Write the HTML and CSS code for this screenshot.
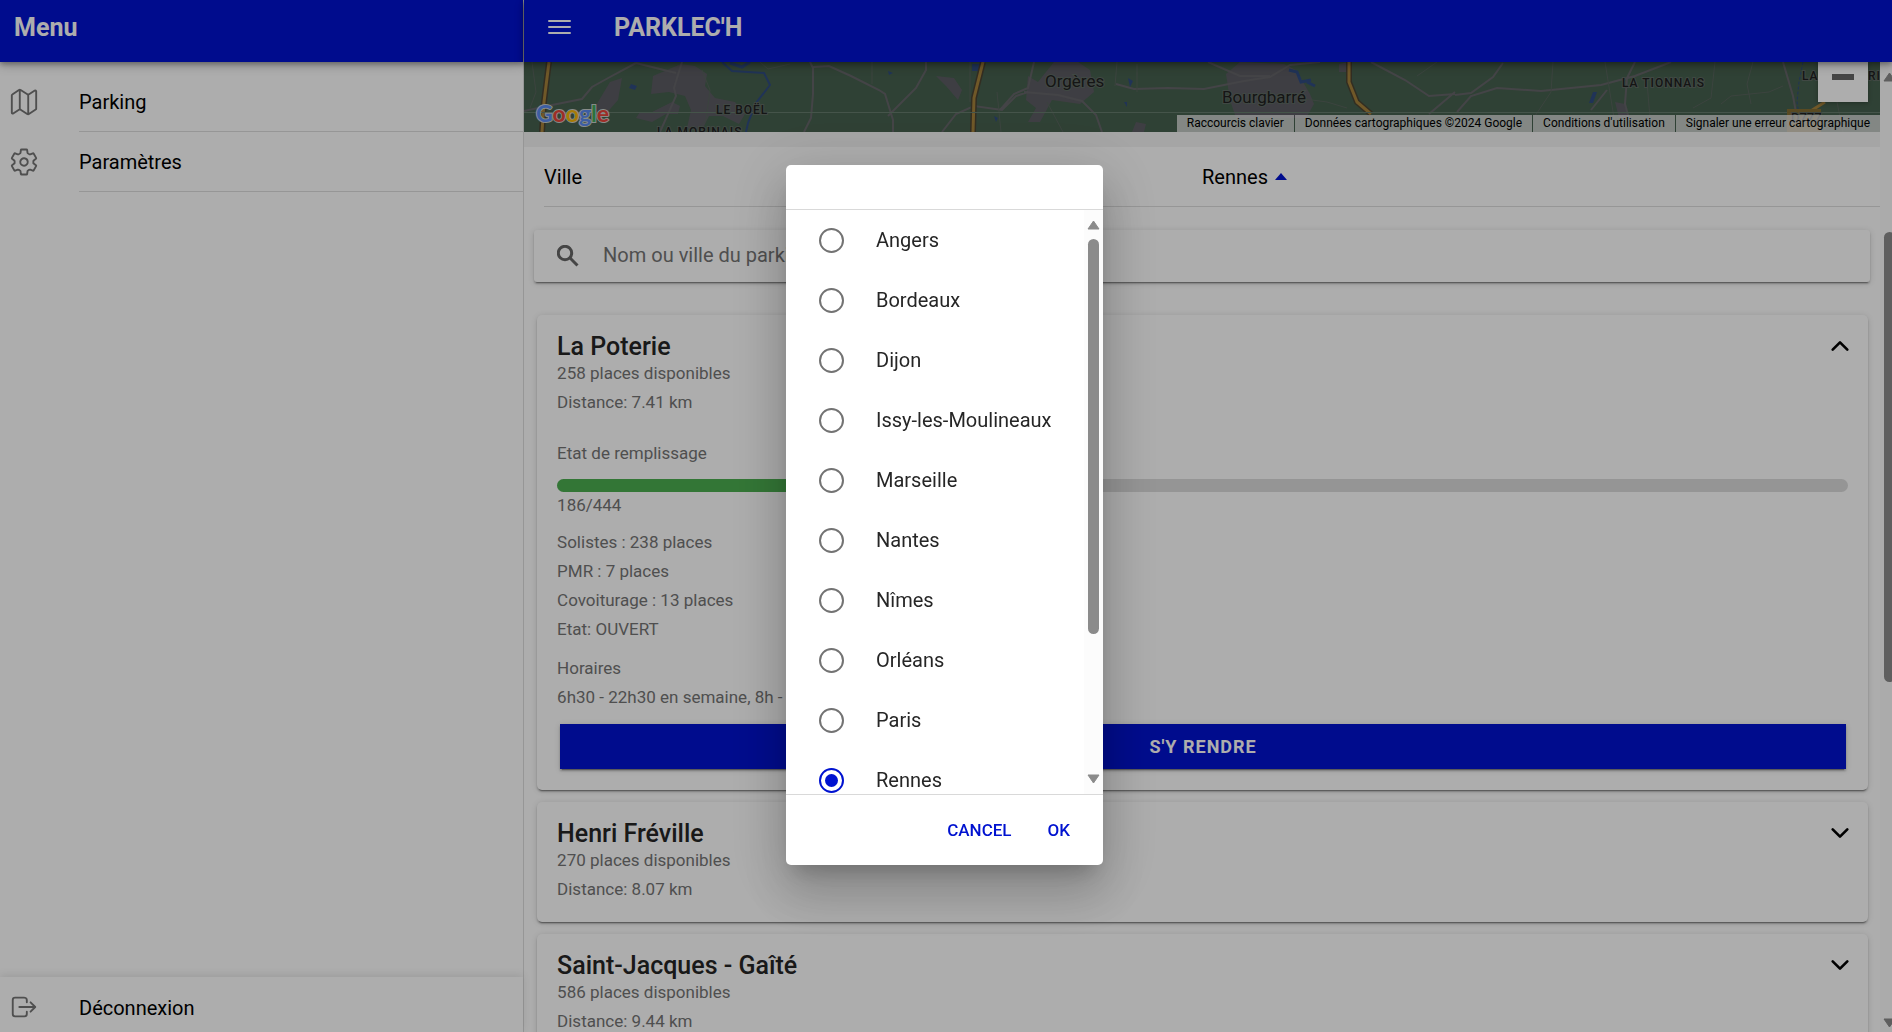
FILE: index.html
```html
<!DOCTYPE html>
<html lang="fr">
<head>
<meta charset="utf-8">
<meta name="viewport" content="width=device-width, initial-scale=1">
<title>PARKLEC'H</title>
<link rel="stylesheet" href="styles.css">
</head>
<body>
<div class="app">
  <aside class="sidebar">
    <header class="toolbar toolbar-menu"><h2 class="toolbar-title">Menu</h2></header>
    <nav class="menu">
      <a class="menu-item" href="#parking">
        <svg class="menu-icon" viewBox="0 0 512 512" aria-hidden="true"><path d="M313.27 124.64L198.73 51.36a32 32 0 00-29.28.35L56.51 127.49A16 16 0 0048 141.63v295.8a16 16 0 0023.49 14.14l97.82-63.79a32 32 0 0129.5-.24l111.86 73a32 32 0 0029.27-.11l115.43-75.94a16 16 0 008.63-14.2V74.57a16 16 0 00-23.49-14.14l-98 63.86a32 32 0 01-29.24.35zM328 128v336M184 384V48"/></svg>
        <span class="menu-label">Parking</span>
      </a>
      <a class="menu-item" href="#parametres">
        <svg class="menu-icon" viewBox="0 0 512 512" aria-hidden="true"><path d="M262.29 192.31a64 64 0 1057.4 57.4 64.13 64.13 0 00-57.4-57.4zM416.39 256a154.34 154.34 0 01-1.53 20.79l45.21 35.46a10.81 10.81 0 012.45 13.75l-42.77 74a10.81 10.81 0 01-13.14 4.59l-44.9-18.08a16.11 16.11 0 00-15.17 1.75A164.48 164.48 0 01325 400.8a15.94 15.94 0 00-8.82 12.14l-6.73 47.89a11.08 11.08 0 01-10.68 9.17h-85.54a11.11 11.11 0 01-10.69-8.87l-6.72-47.82a16.07 16.07 0 00-9-12.22 155.3 155.3 0 01-21.46-12.57 16 16 0 00-15.11-1.71l-44.89 18.07a10.81 10.81 0 01-13.14-4.58l-42.77-74a10.8 10.8 0 012.45-13.75l38.21-30a16.05 16.05 0 006-14.08c-.36-4.17-.58-8.33-.58-12.5s.21-8.27.58-12.35a16 16 0 00-6.07-13.94l-38.19-30A10.81 10.81 0 0149.48 186l42.77-74a10.81 10.81 0 0113.14-4.59l44.9 18.08a16.11 16.11 0 0015.17-1.75A164.48 164.48 0 01187 111.2a15.94 15.94 0 008.82-12.14l6.73-47.89A11.08 11.08 0 01213.23 42h85.54a11.11 11.11 0 0110.69 8.87l6.72 47.82a16.07 16.07 0 009 12.22 155.3 155.3 0 0121.46 12.57 16 16 0 0015.11 1.71l44.89-18.07a10.81 10.81 0 0113.14 4.58l42.77 74a10.8 10.8 0 01-2.45 13.75l-38.21 30a16.05 16.05 0 00-6.05 14.08c.33 4.14.55 8.3.55 12.47z"/></svg>
        <span class="menu-label">Paramètres</span>
      </a>
    </nav>
    <footer class="menu-footer">
      <a class="menu-item" href="#deconnexion">
        <svg class="menu-icon" viewBox="0 0 512 512" aria-hidden="true"><path d="M304 336v40a40 40 0 01-40 40H104a40 40 0 01-40-40V136a40 40 0 0140-40h152c22.09 0 48 17.91 48 40v40M368 336l80-80-80-80M176 256h256"/></svg>
        <span class="menu-label">Déconnexion</span>
      </a>
    </footer>
  </aside>

  <div class="page">
    <header class="toolbar toolbar-page">
      <button class="burger" type="button" aria-label="Menu">
        <svg class="burger-icon" viewBox="0 0 30 30" aria-hidden="true"><path d="M5 9h21M5 15h21M5 21h21"/></svg>
      </button>
      <h1 class="toolbar-title">PARKLEC'H</h1>
    </header>

    <div class="viewport">
      <main class="content">
        <section class="map">
          <svg class="map-tiles" viewBox="0 0 1356 70" preserveAspectRatio="xMinYMin slice" role="img" aria-label="Carte">
            <rect width="1356" height="70" fill="#46604e"/>
            <g fill="#5c5c63">
              <path d="M129 14l28-12 14 2 12 8-2 12 10 12 20 4 10 12-6 10-16-8-14 0-8 16-14-4 4-18-6-14-16-4-18 2z"/>
              <path d="M86 20l12-4-4 22-14 16-14 0 8-14z"/>
              <path d="M148 40l8 4-2 8-12 0-14 8-16-4 4-6 12 0z"/>
              <path d="M412 14l18 2 8 12-4 10-12-14z"/>
              <path d="M504 14l10 6 16-20h24l12 8 4 22-14 12-28-4-12 22-12 0 8-14-10-8z"/>
              <path d="M702 12l14-12 44 2 12 6 14 24 4 10-8 14-70 0-6-18z"/>
              <path d="M612 60l10 2-2 8h-12z"/><path d="M815 2l10-2 0 10-10 0z"/>
              <path d="M1091 40l10 2 4 14-10 0z"/>
            </g>
            <g fill="none" stroke="#656569" stroke-width="2">
              <path d="M0 49l28-6 30-6 10-12 18-10 26-14M158 0l-8 26 2 8-16 36M112 1l40 10M286 0l3 6v26l-2 24-7 14M289 5l16-1 22 10 28 14 6 4 8 26 0 12M364 54l28-28 10-18 0-8M418 70l14-18 18-8 28 4 14-14 12-4M510 0l-6 26-14 6-14 16M500 30l34 3 24 6 14 14 6 17M592 22l18 5 34-1 36 1 40-8 26-4 20-12 30-3M684 0l32 14 30 0M847 0l34 18 24 16 26-2M905 52l26-22"/>
              <path d="M931 33l16-2 22-16 10-14M933 50l14-16 26-8 44 3 60-6 34-9 36-14M1111 0l-8 16-2 26 6 22M1083 28l-16 20M1259 0l10 34 4 22"/>
            </g>
            <g fill="none" stroke="#58645d" stroke-width="1">
              <path d="M8 0l4 30-6 16M178 8l8 20-4 30-10 12M236 0l8 7 22-5M348 0v22M446 0v40M473 30l4 40M523 40l16 30M593 0l-2 24M613 2l0 28M773 36l30 4 20 6M893 14l20-14M1029 0l-2 30-16 24M1081 0l10 62M1123 20l4 48M1191 0l-4 36-18 10M1229 0l-6 22 4 20M1197 42l10-8 38-4 14-6M1313 40l6 30"/>
            </g>
            <g fill="none" stroke="#304c80" stroke-width="2">
              <path d="M198 0l10 9 32 2 6 12-14 18-8 20-2 9"/>
              <path d="M206 1l12 4 8-5M765 8l8 2 4 10 10-2M783 20l8 4" stroke-width="3"/>
              <path d="M1279 0l-4 20-2 20 2 14" stroke-width="1" stroke-dasharray="3 2"/>
            </g>
            <path d="M107 22l6 2-2 4-6-2zM448 2h8v7h-8zM364 9l5 2-4 2zM470 54l4 2-2 4zM604 16l5 3-3 6zM600 40h3v5zM1069 30h4l-4 11h-4z" fill="#304c80"/>
            <g fill="none" stroke="#4b4332" stroke-width="6"><path d="M25 0l-5 40-2 30M459 0l-9 36-1 34M825 0v20l8 20 14 12"/></g>
            <g fill="none" stroke="#a5823c" stroke-width="3"><path d="M25 0l-5 40-2 30M459 0l-9 36-1 34M825 0v20l8 20 14 12M1285 50l16-10"/></g>
            <path d="M0 50.500h1356" stroke="#667c6d" stroke-width="1"/>
            <rect x="1263" y="47" width="34" height="23" fill="#836d33"/>
            <g class="map-labels">
              <text class="map-town" x="521" y="25">Orgères</text>
              <text class="map-town" x="698" y="41">Bourgbarré</text>
              <text class="map-place" x="192" y="52">LE BOËL</text>
              <text class="map-place" x="133" y="74">LA MORINAIS</text>
              <text class="map-place" x="1098" y="25">LA TIONNAIS</text>
              <text class="map-place" x="1278" y="18">LA</text>
              <text class="map-place" x="1344" y="18">RIE</text>
              <text class="map-road" x="1267" y="60">D777</text>
            </g>
            <text class="map-logo" x="12" y="60"><tspan fill="#5a8bf0">G</tspan><tspan fill="#e8453a">o</tspan><tspan fill="#f5b60a">o</tspan><tspan fill="#5a8bf0">g</tspan><tspan fill="#40a95a">l</tspan><tspan fill="#e8453a">e</tspan></text>
          </svg>
          <button class="map-zoom" type="button" aria-label="Zoom arrière"><span class="map-zoom-bar"></span></button>
          <div class="map-credits">
            <button class="credit" type="button">Raccourcis clavier</button>
            <span class="credit">Données cartographiques ©2024 Google</span>
            <a class="credit" href="#conditions">Conditions d'utilisation</a>
            <a class="credit" href="#erreur">Signaler une erreur cartographique</a>
          </div>
        </section>

        <section class="city">
          <div class="city-row">
            <label class="city-label" for="ville">Ville</label>
            <div class="city-value">
              <select class="city-select" id="ville"><option>Rennes</option></select>
              <span class="caret"></span>
            </div>
          </div>
        </section>

        <form class="search">
          <svg class="search-icon" viewBox="0 0 22 22" aria-hidden="true"><circle cx="8" cy="8" r="6.700"/><path d="M12.800 12.800L20.500 20.500"/></svg>
          <input class="search-input" type="search" aria-label="Recherche" placeholder="Nom ou ville du parking">
        </form>

        <div class="cards">
          <article class="card">
            <div class="card-head">
              <h3 class="card-title">La Poterie</h3>
              <button class="chevron" type="button" aria-label="Replier"><svg viewBox="0 0 512 512" aria-hidden="true"><path d="M112 328l144-144 144 144"/></svg></button>
            </div>
            <p>258 places disponibles</p>
            <p>Distance: 7.41 km</p>
            <div class="fill">
              <p>Etat de remplissage</p>
              <div class="bar"><div class="bar-value" style="width: 41.9%"></div></div>
              <p class="fill-count">186/444</p>
            </div>
            <div class="group">
              <p>Solistes : 238 places</p>
              <p>PMR : 7 places</p>
              <p>Covoiturage : 13 places</p>
              <p>Etat: OUVERT</p>
            </div>
            <div class="group">
              <p>Horaires</p>
              <p>6h30 - 22h30 en semaine, 8h -</p>
            </div>
            <button class="go" type="button">S'Y RENDRE</button>
          </article>

          <article class="card">
            <div class="card-head">
              <h3 class="card-title">Henri Fréville</h3>
              <button class="chevron" type="button" aria-label="Déplier"><svg viewBox="0 0 512 512" aria-hidden="true"><path d="M112 184l144 144 144-144"/></svg></button>
            </div>
            <p>270 places disponibles</p>
            <p>Distance: 8.07 km</p>
          </article>

          <article class="card">
            <div class="card-head">
              <h3 class="card-title">Saint-Jacques - Gaîté</h3>
              <button class="chevron" type="button" aria-label="Déplier"><svg viewBox="0 0 512 512" aria-hidden="true"><path d="M112 184l144 144 144-144"/></svg></button>
            </div>
            <p>586 places disponibles</p>
            <p>Distance: 9.44 km</p>
          </article>
        </div>
      </main>
      <div class="scrollbar page-scrollbar" aria-hidden="true">
        <svg class="arrow" viewBox="0 0 13 10"><path d="M6.500 1L12 9H1z"/></svg>
        <div class="track"><div class="thumb"></div></div>
        <svg class="arrow" viewBox="0 0 13 10"><path d="M6.500 9L12 1H1z"/></svg>
      </div>
    </div>
  </div>
</div>

<div class="backdrop">
  <form class="dialog" role="dialog" aria-label="Ville">
    <div class="dialog-head"></div>
    <div class="dialog-body">
      <div class="options">
        <label class="option"><input type="radio" name="city">Angers</label>
        <label class="option"><input type="radio" name="city">Bordeaux</label>
        <label class="option"><input type="radio" name="city">Dijon</label>
        <label class="option"><input type="radio" name="city">Issy-les-Moulineaux</label>
        <label class="option"><input type="radio" name="city">Marseille</label>
        <label class="option"><input type="radio" name="city">Nantes</label>
        <label class="option"><input type="radio" name="city">Nîmes</label>
        <label class="option"><input type="radio" name="city">Orléans</label>
        <label class="option"><input type="radio" name="city">Paris</label>
        <label class="option"><input type="radio" name="city" checked>Rennes</label>
      </div>
      <div class="scrollbar dialog-scrollbar" aria-hidden="true">
        <svg class="arrow" viewBox="0 0 13 10"><path d="M6.500 1L12 9H1z"/></svg>
        <div class="track"><div class="thumb"></div></div>
        <svg class="arrow" viewBox="0 0 13 10"><path d="M6.500 9L12 1H1z"/></svg>
      </div>
    </div>
    <div class="dialog-foot">
      <button class="action" type="button">CANCEL</button>
      <button class="action" type="button">OK</button>
    </div>
  </form>
</div>
</body>
</html>
```

FILE: styles.css
```css
:root {
  --primary: #0012d0;
  --line: #dedede;
  --muted: #757575;
  --text: #262626;
  --lift: 0 3px 1px -2px rgba(0, 0, 0, .3), 0 2px 2px 0 rgba(0, 0, 0, .2), 0 1px 6px 0 rgba(0, 0, 0, .14);
}

* { box-sizing: border-box; }

body {
  margin: 0;
  font-family: Roboto, "Liberation Sans", sans-serif;
  font-size: 20px;
  color: #000;
  background: #fff;
}

h1, h2, h3, p { margin: 0; }
a { color: inherit; text-decoration: none; }
button, input, select { font: inherit; color: inherit; }
button { padding: 0; border: 0; background: none; }

.app {
  display: flex;
  height: 100vh;
  overflow: hidden;
}

/* Toolbars */
.toolbar {
  display: flex;
  align-items: center;
  height: 62px;
  flex: none;
  padding-bottom: 8px;
  color: #fff;
  background: var(--primary);
  box-shadow: 0 2px 5px rgba(0, 0, 0, .3), 0 4px 10px rgba(0, 0, 0, .2);
  position: relative;
  z-index: 1;
}
.toolbar-menu { padding-left: 14px; }
.toolbar-page { padding-left: 20px; gap: 40px; }
.toolbar-title { padding-top: 2px; font-size: 25px; font-weight: 700; line-height: 30px; }
.burger { height: 30px; }
.burger-icon { display: block; width: 30px; height: 30px; fill: none; stroke: #fff; stroke-width: 2; stroke-linecap: round; }

/* Side menu */
.sidebar {
  display: flex;
  flex-direction: column;
  width: 27.7%;
  flex: none;
  border-right: 1px solid var(--line);
}
.menu { flex: 1; padding-top: 10px; }
.menu-item {
  display: flex;
  align-items: center;
  gap: 40px;
  height: 60px;
  padding-left: 9px;
}
.menu-icon {
  width: 30px;
  height: 30px;
  flex: none;
  fill: none;
  stroke: var(--muted);
  stroke-width: 32;
  stroke-linecap: round;
  stroke-linejoin: round;
}
.menu-label { flex: 1; padding-top: 2px; line-height: 57px; border-bottom: 1px solid var(--line); }
.menu-footer {
  height: 55px;
  overflow: hidden;
  flex: none;
  box-shadow: 0 -2px 8px rgba(0, 0, 0, .1);
}
.menu-footer .menu-label { border: 0; }

/* Page */
.page { display: flex; flex-direction: column; flex: 1; min-width: 0; }
.viewport { display: flex; flex: 1; min-height: 0; }
.content { flex: 1; min-width: 0; overflow: hidden; }

.map { position: relative; height: 70px; overflow: hidden; }
.map-tiles { display: block; width: 100%; height: 70px; }
.map-labels { fill: #202020; stroke: #5f6b64; stroke-width: 2; paint-order: stroke; }
.map-town { font-size: 17px; }
.map-place { font-size: 12px; font-weight: 500; letter-spacing: 1px; }
.map-road { font-size: 13px; }
.map-logo { font-family: Lato, sans-serif; font-size: 23px; font-weight: 700; stroke: #c9cfcb; stroke-width: 2; paint-order: stroke; }
.map-zoom {
  position: absolute;
  top: 0;
  right: 12px;
  width: 50px;
  height: 40px;
  background: #fff;
  box-shadow: 0 1px 4px rgba(0, 0, 0, .3);
}
.map-zoom-bar { display: block; width: 22px; height: 6px; margin: 0 auto 10px; background: #666; }
.map-credits {
  position: absolute;
  right: 0;
  bottom: 0;
  display: flex;
  gap: 1px;
}
.credit { padding: 0 10px; font-size: 12px; line-height: 17px; color: #000; background: rgba(245, 245, 245, .7); }

.city { padding-left: 20px; border-top: 15px solid #f3f3f3; }
.city-row {
  display: grid;
  grid-template-columns: 1fr 1fr;
  align-items: center;
  height: 60px;
  padding-right: 20px;
  border-bottom: 1px solid var(--line);
}
.city-value { display: flex; align-items: center; gap: 7px; }
.city-select { appearance: none; padding: 0; border: 0; background: none; }
.caret { border: 6px solid transparent; border-top: 0; border-bottom: 7px solid var(--primary); }

.search {
  display: flex;
  align-items: center;
  gap: 24px;
  height: 52px;
  margin: 23px 10px 0;
  padding: 0 23px;
  border-radius: 3px;
  background: #fff;
  box-shadow: var(--lift);
}
.search-icon { width: 22px; height: 22px; flex: none; fill: none; stroke: #666; stroke-width: 3; }
.search-input { flex: 1; min-width: 0; padding: 0 0 2px; border: 0; outline: 0; background: none; }
.search-input::placeholder { color: var(--muted); opacity: 1; }

.cards { display: grid; gap: 12px; margin: 33px 12px 0 13px; }
.card {
  padding: 18px 20px;
  border-radius: 5px;
  background: #fff;
  box-shadow: var(--lift);
  font-size: 17px;
  line-height: 29px;
  color: var(--muted);
}
.card:first-child { padding-bottom: 21px; }
.card-head { display: flex; justify-content: space-between; align-items: center; height: 26px; }
.card-title { padding-top: 2px; font-size: 25px; font-weight: 500; line-height: 26px; color: var(--text); }
.chevron { width: 17px; height: 26px; display: flex; justify-content: center; }
.chevron svg { width: 26px; height: 26px; flex: none; fill: none; stroke: #000; stroke-width: 52; stroke-linecap: round; stroke-linejoin: round; }
.fill { margin-top: 22px; }
.bar { height: 13px; margin-top: 11px; border-radius: 7px; background: #dcdcdc; overflow: hidden; }
.bar-value { height: 100%; background: #4caf50; }
.fill-count { line-height: 26px; }
.group { margin-top: 10px; }
.go {
  display: block;
  width: calc(100% - 5px);
  height: 45px;
  margin: 12px 2px 0 3px;
  font-size: 18px;
  font-weight: 700;
  letter-spacing: 1px;
  color: #fff;
  background: var(--primary);
  box-shadow: var(--lift);
}

/* Scrollbars */
.scrollbar { display: flex; flex-direction: column; padding: 10px 3px; background: #fcfcfc; }
.arrow { width: 13px; height: 10px; flex: none; fill: #8b8b8b; stroke: #8b8b8b; stroke-width: 1; stroke-linejoin: round; }
.track { flex: 1; margin: 9px 0; }
.thumb { width: 11px; margin-left: 1px; border-radius: 6px; background: #8b8b8b; }
.page-scrollbar { width: 12px; padding-bottom: 4px; overflow: hidden; flex: none; }
.page-scrollbar .thumb { height: 49%; margin-top: 141px; }
.dialog-scrollbar { width: 19px; flex: none; }
.dialog-scrollbar .thumb { height: 75%; }

/* City picker */
.backdrop {
  position: fixed;
  inset: 0;
  z-index: 10;
  display: flex;
  align-items: center;
  justify-content: center;
  padding: 0 3px 2px 0;
  background: rgba(0, 0, 0, .32);
}
.dialog {
  display: flex;
  flex-direction: column;
  width: 317px;
  height: 700px;
  max-height: 90%;
  overflow: hidden;
  border-radius: 5px;
  background: #fff;
  color: var(--text);
  box-shadow: 0 14px 19px -9px rgba(0, 0, 0, .2), 0 30px 48px 4px rgba(0, 0, 0, .14), 0 11px 58px 10px rgba(0, 0, 0, .12);
}
.dialog-head { height: 45px; flex: none; border-bottom: 1px solid #d9d9d9; }
.dialog-body { display: flex; flex: 1; min-height: 0; }
.options { flex: 1; overflow: hidden; }
.option { display: flex; align-items: center; gap: 32px; height: 60px; padding-left: 33px; }
.option input {
  appearance: none;
  display: grid;
  place-items: center;
  width: 25px;
  height: 25px;
  margin: 0;
  border: 2px solid #737373;
  border-radius: 50%;
}
.option input:checked { border-color: var(--primary); }
.option input:checked::before { content: ""; width: 13px; height: 13px; border-radius: 50%; background: var(--primary); }
.dialog-foot {
  display: flex;
  align-items: center;
  justify-content: flex-end;
  gap: 10px;
  height: 71px;
  flex: none;
  padding-right: 20px;
  border-top: 1px solid #d9d9d9;
}
.action { height: 45px; padding: 0 13px; font-size: 17px; font-weight: 500; color: var(--primary); }
```
